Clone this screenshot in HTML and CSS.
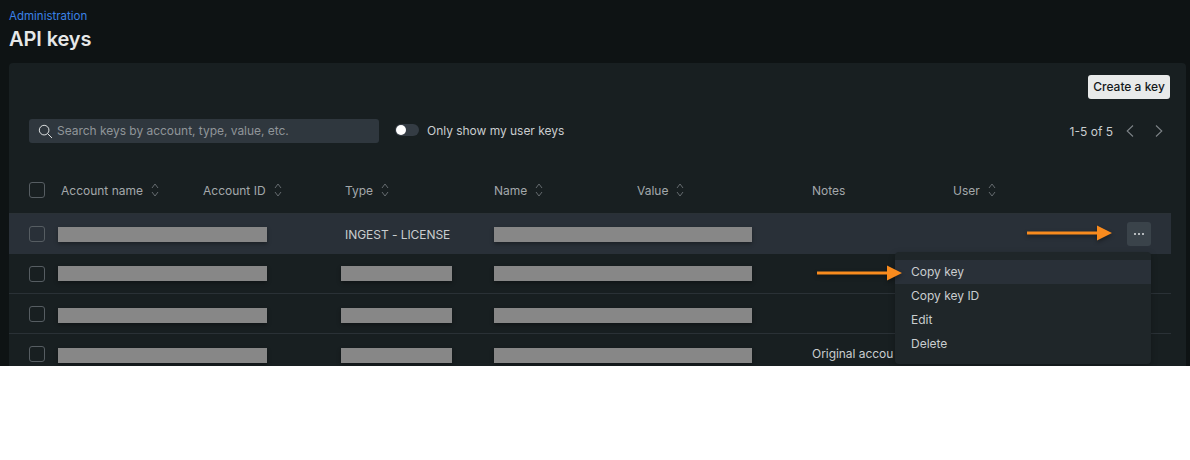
FILE: index.html
```html
<!DOCTYPE html>
<html lang="en">
<head>
    <meta charset="UTF-8">
    <title>API keys</title>
    <link rel="stylesheet" href="styles.css">
</head>
<body>
    <div class="page">
        <a class="breadcrumb" href="#">Administration</a>
        <h1>API keys</h1>
        <div class="panel">
            <div class="actions">
                <button class="create-button">Create a key</button>
            </div>
            <div class="filters">
                <label class="search">
                    <svg width="14" height="14" viewBox="0 0 16 16" fill="none" stroke="#e3e6e6" stroke-width="1.1">
                        <circle cx="7" cy="7" r="5.5"/>
                        <path d="M11 11L16 16"/>
                    </svg>
                    <span>Search keys by account, type, value, etc.</span>
                </label>
                <span class="toggle"><span class="knob"></span></span>
                <span class="toggle-label">Only show my user keys</span>
                <div class="pager">
                    <span>1-5 of 5</span>
                    <svg width="8" height="12" viewBox="0 0 8 12" fill="none" stroke="#7d8387" stroke-width="1.1"><path d="M7 .5L1.2 6 7 11.5"/></svg>
                    <svg width="8" height="12" viewBox="0 0 8 12" fill="none" stroke="#7d8387" stroke-width="1.1"><path d="M1 .5L6.8 6 1 11.5"/></svg>
                </div>
            </div>

            <div class="table">
                <div class="row head">
                    <span class="checkbox"></span>
                    <span class="col">Account name <svg class="sort" width="8" height="14" viewBox="0 0 8 14"><path d="M1 5l3-4 3 4M1 9l3 4 3-4"/></svg></span>
                    <span class="col">Account ID <svg class="sort" width="8" height="14" viewBox="0 0 8 14"><path d="M1 5l3-4 3 4M1 9l3 4 3-4"/></svg></span>
                    <span class="col">Type <svg class="sort" width="8" height="14" viewBox="0 0 8 14"><path d="M1 5l3-4 3 4M1 9l3 4 3-4"/></svg></span>
                    <span class="col">Name <svg class="sort" width="8" height="14" viewBox="0 0 8 14"><path d="M1 5l3-4 3 4M1 9l3 4 3-4"/></svg></span>
                    <span class="col">Value <svg class="sort" width="8" height="14" viewBox="0 0 8 14"><path d="M1 5l3-4 3 4M1 9l3 4 3-4"/></svg></span>
                    <span class="col">Notes</span>
                    <span class="col">User <svg class="sort" width="8" height="14" viewBox="0 0 8 14"><path d="M1 5l3-4 3 4M1 9l3 4 3-4"/></svg></span>
                </div>

                <div class="row active">
                    <span class="checkbox"></span>
                    <span class="bar bar-account"></span>
                    <span class="cell-type">INGEST - LICENSE</span>
                    <span class="bar bar-name"></span>
                    <button class="more-button">
                        <svg width="12" height="4" viewBox="0 0 12 4" fill="#b4b9bc"><rect x="1" y="1" width="2" height="2"/><rect x="5" y="1" width="2" height="2"/><rect x="9" y="1" width="2" height="2"/></svg>
                    </button>
                </div>
                <div class="row">
                    <span class="checkbox"></span>
                    <span class="bar bar-account"></span>
                    <span class="bar bar-type"></span>
                    <span class="bar bar-name"></span>
                </div>
                <div class="row">
                    <span class="checkbox"></span>
                    <span class="bar bar-account low"></span>
                    <span class="bar bar-type low"></span>
                    <span class="bar bar-name low"></span>
                </div>
                <div class="row">
                    <span class="checkbox"></span>
                    <span class="bar bar-account low"></span>
                    <span class="bar bar-type low"></span>
                    <span class="bar bar-name low"></span>
                    <span class="cell-notes">Original accou</span>
                </div>

                <ul class="menu">
                    <li class="selected">Copy key</li>
                    <li>Copy key ID</li>
                    <li>Edit</li>
                    <li>Delete</li>
                </ul>
                <svg class="arrow arrow-top" width="85" height="24" viewBox="0 0 85 24"><path d="M0 10.5h70V4.5l15 7.5-15 7.5v-6H0z"/></svg>
                <svg class="arrow arrow-menu" width="85" height="24" viewBox="0 0 85 24"><path d="M0 10.5h70V4.5l15 7.5-15 7.5v-6H0z"/></svg>
            </div>
        </div>
    </div>
</body>
</html>
```

FILE: styles.css
```css
html, body {
    margin: 0;
    padding: 0;
    background-color: #ffffff;
}
body {
    font-family: 'Inter', sans-serif;
    font-size: 12px;
    color: #c9cdcf;
}
.page {
    height: 366px;
    overflow: hidden;
    box-sizing: border-box;
    padding: 9px 4px 0 9px;
    background-color: #0e1314;
}
.breadcrumb {
    display: block;
    height: 14px;
    line-height: 14px;
    color: #3a82e6;
    text-decoration: none;
    font-size: 11.5px;
}
h1 {
    margin: 4px 0 12px;
    height: 24px;
    line-height: 24px;
    font-size: 20px;
    font-weight: 600;
    letter-spacing: -0.1px;
    color: #e6e8e8;
}
.panel {
    height: 340px;
    background-color: #181f21;
    border-radius: 4px;
}
.actions {
    display: flex;
    justify-content: flex-end;
    padding: 12px 16px 0 0;
}
.create-button {
    height: 24px;
    width: 82px;
    padding: 0 0 2px;
    border: none;
    border-radius: 3px;
    background-color: #e8eaea;
    color: #14181a;
    font-family: inherit;
    font-size: 12px;
    font-weight: 500;
}
.filters {
    display: flex;
    align-items: center;
    height: 24px;
    margin-top: 20px;
    padding: 0 23px 0 20px;
}
.search {
    display: flex;
    align-items: center;
    gap: 5px;
    box-sizing: border-box;
    width: 350px;
    height: 24px;
    padding-left: 9px;
    background-color: #2f373e;
    border-radius: 3px;
    color: #8f9599;
    letter-spacing: -0.03px;
}
.search span {
    margin-bottom: 2px;
}
.toggle {
    display: flex;
    align-items: center;
    box-sizing: border-box;
    width: 24px;
    height: 12px;
    margin: 0 8px 2px 16px;
    padding-left: 1px;
    background-color: #343c44;
    border-radius: 6px;
}
.knob {
    width: 10px;
    height: 10px;
    border-radius: 50%;
    background-color: #ffffff;
}
.toggle-label {
    margin-bottom: 2px;
    letter-spacing: -0.03px;
    color: #c9cdcf;
}
.pager {
    display: flex;
    align-items: center;
    gap: 21px;
    margin-left: auto;
}
.pager span {
    margin-right: -8px;
}
.table {
    position: relative;
    width: 1162px;
    margin-top: 26px;
}
.row {
    display: grid;
    grid-template-columns: 52px 142px 142px 149px 143px 175px 141px 1fr;
    align-items: center;
    height: 40px;
    border-bottom: 1px solid #2a3136;
    box-sizing: border-box;
}
.row .checkbox {
    margin-left: 20px;
}
.head {
    height: 44px;
    padding-bottom: 2px;
    border-bottom: none;
    color: #a3a8ab;
}
.active {
    height: 41px;
    background-color: #293038;
    border-bottom: none;
    border-top: 1px solid #2a3136;
}
.checkbox {
    display: block;
    box-sizing: border-box;
    width: 16px;
    height: 16px;
    border: 1px solid #565d62;
    border-radius: 3px;
}
.col {
    display: flex;
    align-items: center;
    gap: 8px;
}
.sort {
    fill: none;
    stroke: #656b6f;
    stroke-width: 1;
}
.bar {
    height: 15px;
    background-color: #878787;
    box-shadow: 0 2px 4px rgba(0, 0, 0, 0.35);
}
.low {
    margin-top: 4px;
}
.bar-account {
    grid-column: 2 / 4;
    width: 209px;
    margin-left: -3px;
}
.bar-type {
    grid-column: 4;
    width: 111px;
    margin-left: -4px;
}
.bar-name {
    grid-column: 5 / 7;
    width: 258px;
}
.cell-type {
    grid-column: 4;
    letter-spacing: -0.05px;
    color: #c9cdcf;
}
.cell-notes {
    grid-column: 7 / 8;
    white-space: nowrap;
    letter-spacing: -0.05px;
    color: #c9cdcf;
}
.more-button {
    grid-column: 8;
    justify-self: end;
    display: flex;
    align-items: center;
    justify-content: center;
    width: 24px;
    height: 24px;
    margin-right: 20px;
    padding: 0;
    border: none;
    border-radius: 3px;
    background-color: #3a434a;
}
.menu {
    position: absolute;
    left: 886px;
    top: 83px;
    box-sizing: border-box;
    width: 256px;
    height: 112px;
    margin: 0;
    padding: 8px 0;
    list-style: none;
    background-color: #1f2629;
    border-radius: 4px;
    box-shadow: 0 2px 6px rgba(0, 0, 0, 0.25);
}
.menu li {
    height: 24px;
    line-height: 24px;
    padding-left: 16px;
    color: #c9cdcf;
}
.menu .selected {
    background-color: #293038;
}
.arrow {
    fill: #f98b1e;
    filter: drop-shadow(0 2px 2px rgba(0, 0, 0, 0.4));
}
.arrow-top {
    position: absolute;
    left: 1018px;
    top: 52px;
}
.arrow-menu {
    position: absolute;
    left: 808px;
    top: 92px;
}
```
